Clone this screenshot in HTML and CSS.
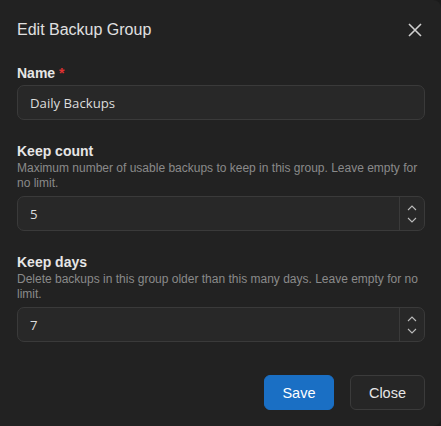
FILE: index.html
```html
<!DOCTYPE html>
<html lang="en">
<head>
    <meta charset="UTF-8">
    <title>Edit Backup Group</title>
    <link rel="stylesheet" href="styles.css">
</head>
<body>
    <div class="modal">
        <header class="modal-header">
            <h2>Edit Backup Group</h2>
            <button class="close-x" aria-label="Close">
                <svg width="14" height="14" viewBox="0 0 14 14"><path d="M1 1L13 13M13 1L1 13" stroke="#cfcfcf" stroke-width="1.6" fill="none"/></svg>
            </button>
        </header>

        <div class="modal-body">
            <div class="field">
                <label>Name <span class="req">*</span></label>
                <div class="input">Daily Backups</div>
            </div>

            <div class="field">
                <label>Keep count</label>
                <p class="hint">Maximum number of usable backups to keep in this group. Leave empty for no limit.</p>
                <div class="input number">
                    <span class="value">5</span>
                    <span class="spin">
                        <svg width="10" height="6" viewBox="0 0 10 6"><path d="M1 5L5 1L9 5" stroke="#bbb" stroke-width="1.1" fill="none"/></svg>
                        <svg width="10" height="6" viewBox="0 0 10 6"><path d="M1 1L5 5L9 1" stroke="#bbb" stroke-width="1.1" fill="none"/></svg>
                    </span>
                </div>
            </div>

            <div class="field">
                <label>Keep days</label>
                <p class="hint">Delete backups in this group older than this many days. Leave empty for no limit.</p>
                <div class="input number">
                    <span class="value">7</span>
                    <span class="spin">
                        <svg width="10" height="6" viewBox="0 0 10 6"><path d="M1 5L5 1L9 5" stroke="#bbb" stroke-width="1.1" fill="none"/></svg>
                        <svg width="10" height="6" viewBox="0 0 10 6"><path d="M1 1L5 5L9 1" stroke="#bbb" stroke-width="1.1" fill="none"/></svg>
                    </span>
                </div>
            </div>
        </div>

        <footer class="modal-footer">
            <button class="btn primary">Save</button>
            <button class="btn">Close</button>
        </footer>
    </div>
</body>
</html>
```

FILE: styles.css
```css
* {
    margin: 0;
    padding: 0;
    box-sizing: border-box;
}

body {
    background: #1b1b1b;
    font-family: 'Liberation Sans', Arial, sans-serif;
    color: #e2e2e2;
}

.modal {
    width: 441px;
    height: 426px;
    background: #222222;
    border-radius: 0 8px 8px 0;
    padding: 0 16px 0 17px;
}

.modal-header {
    display: flex;
    align-items: center;
    justify-content: space-between;
    height: 61px;
    padding-bottom: 2px;
}

.modal-header h2 {
    font-weight: normal;
    font-size: 16px;
    color: #e0e0e0;
}

.close-x {
    background: none;
    border: none;
    width: 16px;
    height: 16px;
    display: flex;
    align-items: center;
    justify-content: center;
    margin-right: 2px;
}

.field {
    margin-top: 4px;
    margin-bottom: 23px;
}

.field label {
    display: block;
    font-weight: bold;
    font-size: 14px;
    color: #e6e6e6;
    margin-bottom: 4px;
}

.req {
    color: #e03131;
}

.hint {
    font-size: 12px;
    line-height: 14.5px;
    color: #8a8a8a;
    margin-top: -2px;
    margin-bottom: 6px;
}

.input {
    height: 35px;
    background: #282828;
    border: 1px solid #3a3a3a;
    border-radius: 7px;
    padding: 0 12px;
    display: flex;
    align-items: center;
    font-family: 'Open Sans', 'Noto Sans', sans-serif;
    font-size: 13.2px;
    color: #dcdcdc;
}

.input.number {
    padding-right: 0;
    justify-content: space-between;
}

.spin {
    width: 25px;
    height: 100%;
    border-left: 1px solid #3a3a3a;
    display: flex;
    flex-direction: column;
    align-items: center;
    justify-content: space-between;
    padding: 8px 0 7px;
}

.modal-footer {
    display: flex;
    justify-content: flex-end;
    gap: 16px;
    margin-top: 33px;
}

.btn {
    height: 35px;
    padding: 0 18px;
    border-radius: 6px;
    border: 1px solid #3b3b3b;
    background: #262626;
    color: #e6e6e6;
    font-family: 'Liberation Sans', Arial, sans-serif;
    font-size: 14.5px;
}

.btn.primary {
    background: #1a6fc4;
    border-color: #1a6fc4;
    color: #fff;
    width: 70px;
    padding: 0;
}
```
